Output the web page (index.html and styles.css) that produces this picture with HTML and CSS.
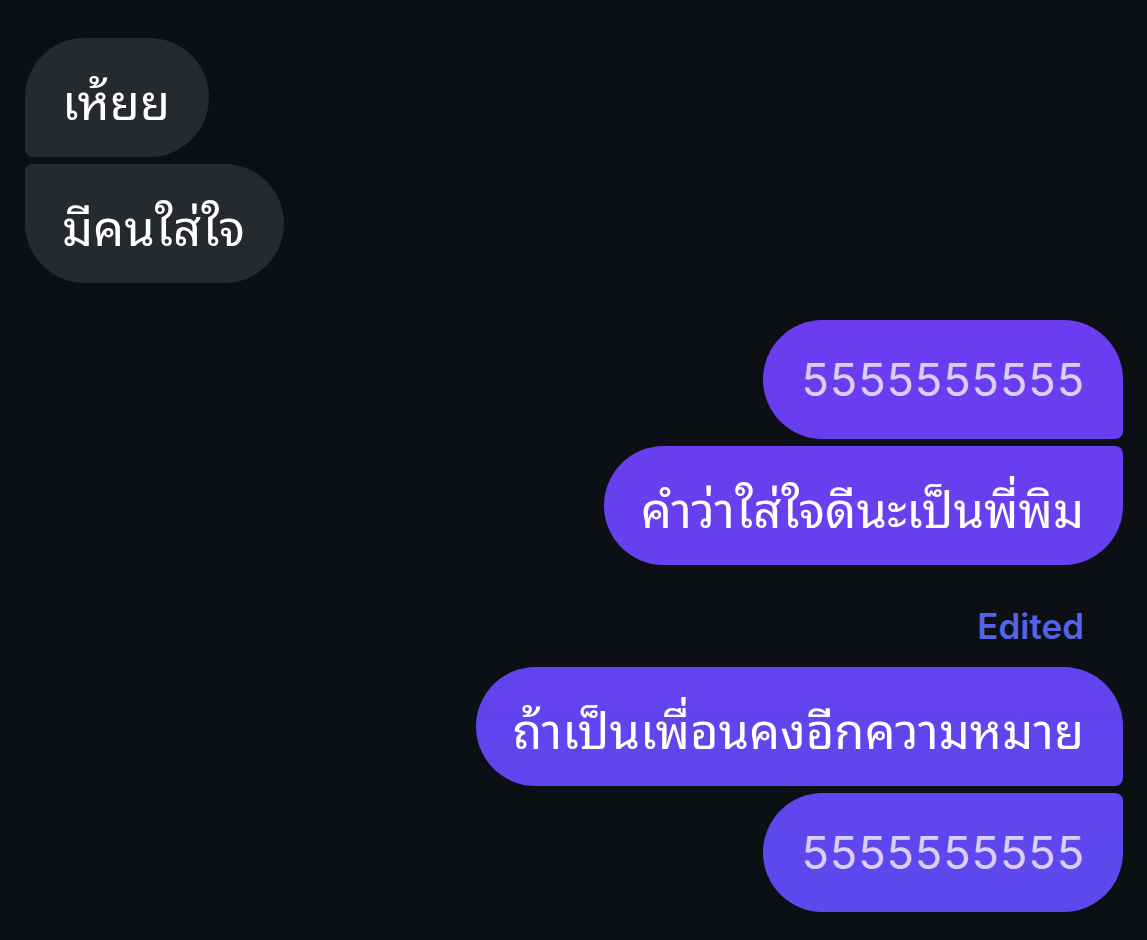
FILE: index.html
```html
<!DOCTYPE html>
<html lang="th">
<head>
<meta charset="utf-8">
<title>Chat</title>
<link rel="stylesheet" href="styles.css">
</head>
<body>
<main class="chat">
  <section class="group group-in">
    <div class="bubble in first">เห้ยย</div>
    <div class="bubble in last">มีคนใส่ใจ</div>
  </section>
  <section class="group group-out">
    <div class="bubble out first num">5555555555</div>
    <div class="bubble out last">คำว่าใส่ใจดีนะเป็นพี่พิม</div>
  </section>
  <div class="edited">Edited</div>
  <section class="group group-out tight">
    <div class="bubble out first">ถ้าเป็นเพื่อนคงอีกความหมาย</div>
    <div class="bubble out last num">5555555555</div>
  </section>
</main>
</body>
</html>
```

FILE: styles.css
```css
html, body {
  margin: 0;
  padding: 0;
  background: #0c0f14;
}

body {
  width: 1147px;
  height: 940px;
  overflow: hidden;
  font-family: "Noto Sans Thai Looped", "Loma", "Garuda", "Noto Sans Thai", "Tlwg Typist", "Noto Sans", sans-serif;
}

.chat {
  display: flex;
  flex-direction: column;
  padding: 38px 24px 0 25px;
}

.group {
  display: flex;
  flex-direction: column;
  gap: 7px;
}

.group-in {
  align-items: flex-start;
}

.group-out {
  align-items: flex-end;
  margin-top: 37px;
}

.group-out.tight {
  margin-top: 21px;
}

.bubble {
  box-sizing: border-box;
  height: 119px;
  display: flex;
  align-items: center;
  padding: 0 39px 0 37px;
  font-size: 49px;
  color: #ffffff;
  white-space: nowrap;
  border-radius: 60px;
}

.in {
  background: #26292e;
}

.in.first {
  border-bottom-left-radius: 8px;
}

.in.last {
  border-top-left-radius: 8px;
}

.out {
  background: linear-gradient(180deg, #7436f0 0px, #6a3df0 400px, #5c49ee 940px);
  background-attachment: fixed;
}

.out.first {
  border-bottom-right-radius: 8px;
}

.out.last {
  border-top-right-radius: 8px;
}

.num {
  font-family: "Inter", "Roboto", sans-serif;
  font-size: 45px;
  letter-spacing: 1px;
  color: #dccff7;
  padding-left: 38px;
  padding-right: 38px;
}

.edited {
  align-self: flex-end;
  margin: 41px 39px 0 0;
  font-family: "Inter", "Roboto", sans-serif;
  font-weight: 600;
  font-size: 35px;
  line-height: 40px;
  color: #5563e8;
}
```
